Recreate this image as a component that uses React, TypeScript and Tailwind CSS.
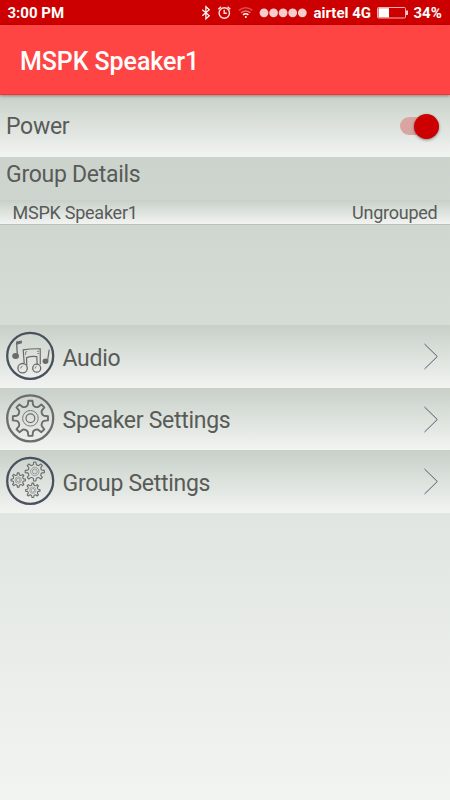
import React from "react";

interface GearProps {
  cx: number;
  cy: number;
  r: number;
  root: number;
  teeth: number;
  width: number;
}

function gearPath({ cx, cy, r, root, teeth }: GearProps) {
  const step = (Math.PI * 2) / teeth;
  const at = (radius: number, a: number) =>
    `${(cx + radius * Math.cos(a)).toFixed(2)} ${(cy + radius * Math.sin(a)).toFixed(2)}`;
  let d = "";
  for (let i = 0; i < teeth; i++) {
    const a = i * step - Math.PI / 2;
    d += `${i === 0 ? "M" : "L"}${at(root * 1.06, a - 0.24 * step)}`;
    d += `L${at(r, a - 0.15 * step)}L${at(r, a + 0.15 * step)}`;
    d += `L${at(root * 1.06, a + 0.24 * step)}`;
    // rounded valley between two teeth
    d += `C${at(root * 0.94, a + 0.34 * step)} ${at(root * 0.94, a + 0.66 * step)} ${at(root * 1.06, a + 0.76 * step)}`;
  }
  return d + "Z";
}

function Gear(props: GearProps) {
  return <path d={gearPath(props)} strokeWidth={props.width} strokeLinejoin="round" />;
}

function AudioIcon() {
  return (
    <svg className="w-[50px] h-[50px]" viewBox="0 0 50 50" fill="none" stroke="#6a6a6a">
      <circle cx="25.2" cy="24.8" r="23" stroke="#4a515e" strokeWidth="2.3" />
      <path d="M12.4 25L11.6 11.5" strokeWidth="1.3" />
      <path d="M11 10.6l5.8-1.2.2 2.8-5.4 1.6z" fill="#6a6a6a" stroke="none" />
      <ellipse cx="10.6" cy="25" rx="3.4" ry="2.9" fill="#6a6a6a" stroke="none" />
      <path d="M19.2 32.4L18.2 18.8q8-1.3 17-1l.1 15.6" strokeWidth="1.2" />
      <path d="M21.8 34.5L21.5 26.6q5-1.8 10.3-1l.4 8" strokeWidth="1.2" />
      <path d="M20.6 24v-2.8l1.6-.8M32 20.3h2M32.4 22.5h1.6" strokeWidth=".8" />
      <circle cx="17.6" cy="37.2" r="4.7" strokeWidth="1.3" />
      <circle cx="31.7" cy="37.2" r="4" strokeWidth="1.3" />
      <path d="M15.6 37.5q.2-2 2-2.3M30 37.5q.2-1.8 1.7-2" strokeWidth=".8" />
      <path d="M44.2 18.6L42.5 30" strokeWidth="1.2" />
      <ellipse cx="40.5" cy="30.3" rx="2.9" ry="2.7" fill="#6a6a6a" stroke="none" />
    </svg>
  );
}

function SpeakerIcon() {
  return (
    <svg className="w-[50px] h-[50px]" viewBox="0 0 50 50" fill="none" stroke="#6c6c6c">
      <circle cx="25.2" cy="24.3" r="23" strokeWidth="2.3" />
      <Gear cx={25.4} cy={24.3} r={17.7} root={13} teeth={8} width={1.9} />
      <circle cx="25.4" cy="24.3" r="7.8" strokeWidth=".9" />
      <circle cx="25.4" cy="24.3" r="4.4" strokeWidth="1.2" />
    </svg>
  );
}

function GroupIcon() {
  return (
    <svg className="w-[50px] h-[50px]" viewBox="0 0 50 50" fill="none" stroke="#686b6b">
      <circle cx="25.2" cy="24.8" r="23" stroke="#4a515e" strokeWidth="2.3" />
      <Gear cx={29.8} cy={15.5} r={9.6} root={7} teeth={8} width={1.1} />
      <circle cx="29.8" cy="15.5" r="4.2" strokeWidth=".5" />
      <circle cx="29.8" cy="15.5" r="2.4" strokeWidth=".6" />
      <Gear cx={13.2} cy={24} r={7.2} root={5.3} teeth={8} width={1.1} />
      <circle cx="13.2" cy="24" r="3.2" strokeWidth=".5" />
      <circle cx="13.2" cy="24" r="1.8" strokeWidth=".6" />
      <Gear cx={27.8} cy={34.3} r={7.2} root={5.3} teeth={8} width={1.1} />
      <circle cx="27.8" cy="34.3" r="3.2" strokeWidth=".5" />
      <circle cx="27.8" cy="34.3" r="1.8" strokeWidth=".6" />
    </svg>
  );
}

function StatusBar() {
  return (
    <div className="h-[25px] shrink-0 bg-[#cc0000] text-white flex items-center pl-[7.5px] pr-[7px] text-[15px] leading-[25px] font-bold">
      <span className="pt-[2px]">3:00 PM</span>
      <svg className="ml-auto w-[107px] h-[25px] shrink-0" viewBox="200 0 107 25" fill="none" stroke="#fff">
        <path d="M202.3 9.8l7 6-3.4 3V6.7l3.4 3-7 6" strokeWidth="1.2" />
        <g stroke="#ffe3e3" strokeWidth="1.4">
          <circle cx="224.3" cy="13" r="5.2" />
          <path d="M218.3 9.2l2.7-2.4M230.3 9.2l-2.7-2.4M224.2 9.8v3.5h2.6" />
        </g>
        <path d="M239 10.3q6.7-5 13.4 0" stroke="#e04d4d" strokeWidth="1.5" />
        <path d="M241 12.8q4.7-3.5 9.4 0" stroke="#e67070" strokeWidth="1.5" />
        <path d="M243 14.8q2.7-2.2 5.4 0" strokeWidth="1.5" />
        <circle cx="245.8" cy="17" r="1" fill="#fff" stroke="none" />
        <g fill="#f6cccc" stroke="none">
          <circle cx="264" cy="12.8" r="4.4" />
          <circle cx="273.6" cy="12.8" r="4.4" />
          <circle cx="283.1" cy="12.8" r="4.4" />
          <circle cx="292.7" cy="12.8" r="4.4" />
          <circle cx="302.3" cy="12.8" r="4.4" />
        </g>
      </svg>
      <span className="ml-[6.5px] w-[58px] pt-[2px] whitespace-nowrap">airtel 4G</span>
      <svg className="ml-[5.5px] w-[32px] h-[13px]" viewBox="0 0 32 13">
        <rect x=".5" y="1.5" width="28" height="10.5" rx="1" fill="none" stroke="#f4b0b0" />
        <rect x="1.5" y="2.2" width="10.5" height="9.2" fill="#fff" />
        <rect x="29" y="4.5" width="2" height="4.5" fill="#f4caca" />
      </svg>
      <span className="ml-[4.5px] w-[29.5px] pt-[2px]">34%</span>
    </div>
  );
}

interface MenuRowProps {
  label: string;
  icon: React.ReactNode;
}

function MenuRow({ label, icon }: MenuRowProps) {
  return (
    <div className="h-[62.5px] flex items-center pl-[5px] pr-[11px] bg-linear-to-b from-[#c8d0c8] to-[#f2f4f2]">
      {icon}
      <span className="ml-[7.5px] pt-[5px] text-[23px] tracking-[-0.28px]">{label}</span>
      <svg className="ml-auto w-4 h-[27px] mt-px" viewBox="0 0 16 27" fill="none" stroke="#565a6d" strokeWidth="1">
        <path d="M1.5 1L14.3 13.5 1.5 26" />
      </svg>
    </div>
  );
}

function App() {
  return (
    <div className="w-[450px] h-[800px] overflow-hidden flex flex-col font-[Roboto,sans-serif] text-[#585b58]">
      <StatusBar />
      <header className="relative h-[70px] shrink-0 bg-[#ff4444] border-b border-[#f83232] flex items-center pl-5 shadow-[0_1px_3px_rgba(0,0,0,0.35)]">
        <h1 className="text-white text-[25px] font-medium pt-[5px] tracking-[-0.08px]">MSPK Speaker1</h1>
      </header>
      <main className="grow flex flex-col bg-linear-to-b from-[#c8d0c8] to-[#f2f4f2]">
        <div className="h-[62px] shrink-0 flex items-center justify-between pl-[6px] pr-[11px] bg-linear-to-b from-[#c8d0c8] to-[#f2f4f2]">
          <span className="text-[23px] pt-[3px] tracking-[-0.28px]">Power</span>
          <div className="flex items-center justify-end w-[39px] h-[18px] rounded-full bg-[#d9a5a3]">
            <div className="w-[25px] h-[25px] shrink-0 rounded-full bg-[#cc0000] shadow-[0_1px_3px_rgba(0,0,0,0.45)]" />
          </div>
        </div>
        <h2 className="h-[43px] shrink-0 pl-[6px] text-[23px] leading-[35px] tracking-[-0.28px]">Group Details</h2>
        <div className="h-[25px] shrink-0 flex items-center justify-between pl-[12.5px] pr-[12.5px] text-[18px] bg-linear-to-b from-[#c8d0c8] to-[#f2f4f2] border-b border-[#b9c2bb]">
          <span className="tracking-[-0.25px]">MSPK Speaker1</span>
          <span className="tracking-[-0.25px]">Ungrouped</span>
        </div>
        <div className="mt-[100px]">
          <MenuRow label="Audio" icon={<AudioIcon />} />
          <MenuRow label="Speaker Settings" icon={<SpeakerIcon />} />
          <MenuRow label="Group Settings" icon={<GroupIcon />} />
        </div>
      </main>
    </div>
  );
}

export default App;
